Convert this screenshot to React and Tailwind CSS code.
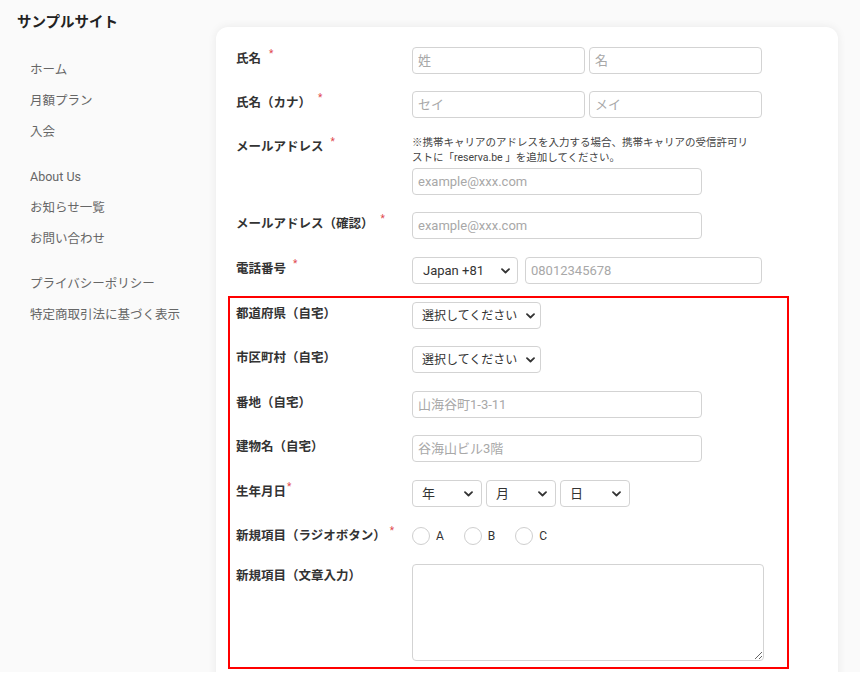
import React from "react";

const FONT = { fontFamily: "Roboto, 'Noto Sans CJK JP', sans-serif" };

function Req({ className = "ml-[7px]" }) {
  return (
    <span className={`relative -top-[6px] text-[10px] font-normal text-[#e0474c] ${className}`}>*</span>
  );
}

function Chevron({ className }) {
  return (
    <svg className={className} width="9" height="6" viewBox="0 0 9 6" fill="none">
      <path d="M1 1.2l3.5 3.3L8 1.2" stroke="#333" strokeWidth="1.8" strokeLinecap="round" strokeLinejoin="round" />
    </svg>
  );
}

function Input({ w, placeholder }) {
  return (
    <input
      type="text"
      placeholder={placeholder}
      className={`${w} h-[27px] rounded-[4px] border border-[#d3d3d3] bg-white pl-[5px] text-[13px] text-[#333] outline-none placeholder:text-[#a8a8a8]`}
      style={FONT}
    />
  );
}

function Select({ w, label, pl = "pl-[10px]", chev = "right-[9px]", size = "text-[13px]" }) {
  return (
    <div className={`relative ${w} h-[27px]`}>
      <select
        className={`h-full w-full appearance-none rounded-[4px] border border-[#d3d3d3] bg-white ${pl} ${size} text-[#333] outline-none`}
        style={FONT}
        defaultValue=""
      >
        <option value="">{label}</option>
      </select>
      <Chevron className={`pointer-events-none absolute top-[11px] ${chev}`} />
    </div>
  );
}

function Row({ label, req, reqClass, children, mb = "mb-[17px]" }) {
  return (
    <div className={`flex items-start ${mb}`}>
      <div className="w-[176px] shrink-0 pt-[2px] text-[12.5px] font-bold leading-[20px] text-[#333]">
        {label}
        {req && <Req className={reqClass} />}
      </div>
      <div>{children}</div>
    </div>
  );
}

function Radio({ label }) {
  return (
    <label className="flex items-center">
      <input
        type="radio"
        name="r"
        className="h-[18px] w-[18px] appearance-none rounded-full border border-[#cfcfcf] bg-white"
      />
      <span className="ml-[6px] text-[12px] text-[#333]">{label}</span>
    </label>
  );
}

export default function App() {
  const nav1 = ["ホーム", "月額プラン", "入会"];
  const nav2 = ["About Us", "お知らせ一覧", "お問い合わせ"];
  const nav3 = ["プライバシーポリシー", "特定商取引法に基づく表示"];
  const NavGroup = ({ items, mb }) => (
    <div className={mb}>
      {items.map((t) => (
        <div key={t} className="h-[31px] text-[12.5px] leading-[31px] text-[#666]">
          {t}
        </div>
      ))}
    </div>
  );
  return (
    <div className="h-[686px] w-[860px] overflow-hidden bg-white" style={FONT}>
      <div className="flex h-[672px] overflow-hidden bg-[#fafafa]">
        <aside className="w-[216px] shrink-0">
          <div className="pl-[17px] pt-[13px] text-[14.5px] font-bold leading-[20px] text-[#222]">
            サンプルサイト
          </div>
          <nav className="pl-[30px] pt-[21px]">
            <NavGroup items={nav1} mb="mb-[14px]" />
            <NavGroup items={nav2} mb="mb-[14px]" />
            <NavGroup items={nav3} />
          </nav>
        </aside>
        <main className="flex-1 pt-[27px] pr-[22px]">
          <div className="h-[680px] rounded-[12px] bg-white pl-[20px] pt-[20px] shadow-[0_0_10px_rgba(0,0,0,0.07)]">
            <Row label="氏名" req reqClass="ml-[8px]">
              <div className="flex gap-[4px]">
                <Input w="w-[173px]" placeholder="姓" />
                <Input w="w-[173px]" placeholder="名" />
              </div>
            </Row>
            <Row label="氏名（カナ）" req reqClass="ml-[7px]">
              <div className="flex gap-[4px]">
                <Input w="w-[173px]" placeholder="セイ" />
                <Input w="w-[173px]" placeholder="メイ" />
              </div>
            </Row>
            <Row label="メールアドレス" req reqClass="ml-[7px]">
              <div className="whitespace-nowrap text-[10.5px] leading-[15px] text-[#444]">
                ※携帯キャリアのアドレスを入力する場合、携帯キャリアの受信許可リ
                <br />
                ストに「reserva.be 」を追加してください。
              </div>
              <div className="mt-[3px]">
                <Input w="w-[290px]" placeholder="example@xxx.com" />
              </div>
            </Row>
            <Row label="メールアドレス（確認）" req reqClass="ml-[7px]" mb="mb-[18px]">
              <Input w="w-[290px]" placeholder="example@xxx.com" />
            </Row>
            <Row label="電話番号" req reqClass="ml-[7px]" mb="mb-[12px]">
              <div className="flex gap-[7px]">
                <Select w="w-[106px]" label="Japan +81" chev="right-[8px]" />
                <Input w="w-[237px]" placeholder="08012345678" />
              </div>
            </Row>
            <div className="-ml-[8px] w-[561px] border-2 border-[#ff0000] pb-[6px] pl-[6px] pt-[4px]">
              <Row label="都道府県（自宅）">
                <Select w="w-[129px]" label="選択してください" pl="pl-[9px]" chev="right-[6px]" size="text-[12px]" />
              </Row>
              <Row label="市区町村（自宅）" mb="mb-[18px]">
                <Select w="w-[129px]" label="選択してください" pl="pl-[9px]" chev="right-[6px]" size="text-[12px]" />
              </Row>
              <Row label="番地（自宅）">
                <Input w="w-[290px]" placeholder="山海谷町1-3-11" />
              </Row>
              <Row label="建物名（自宅）" mb="mb-[18px]">
                <Input w="w-[290px]" placeholder="谷海山ビル3階" />
              </Row>
              <Row label="生年月日" req reqClass="ml-[1px]">
                <div className="flex gap-[4px]">
                  <Select w="w-[70px]" label="年" pl="pl-[9px]" chev="right-[9px]" />
                  <Select w="w-[70px]" label="月" pl="pl-[9px]" chev="right-[9px]" />
                  <Select w="w-[70px]" label="日" pl="pl-[9px]" chev="right-[9px]" />
                </div>
              </Row>
              <Row label="新規項目（ラジオボタン）" req reqClass="ml-[4px]">
                <div className="flex h-[23px] items-center gap-[20px] pt-[1px]">
                  <Radio label="A" />
                  <Radio label="B" />
                  <Radio label="C" />
                </div>
              </Row>
              <Row label="新規項目（文章入力）" mb="mb-0">
                <textarea className="block h-[97px] w-[352px] rounded-[4px] border border-[#d3d3d3] bg-white outline-none" />
              </Row>
            </div>
          </div>
        </main>
      </div>
    </div>
  );
}
